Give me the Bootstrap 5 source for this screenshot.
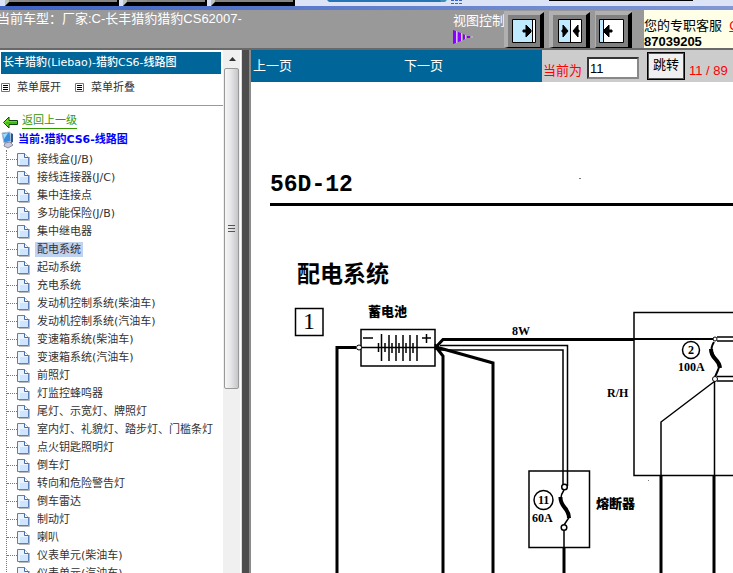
<!DOCTYPE html>
<html lang="zh-CN">
<head>
<meta charset="utf-8">
<meta name="viewport" content="width=device-width, initial-scale=1">
<title>长丰猎豹CS6 线路图</title>
<link href="https://cdn.jsdelivr.net/npm/bootstrap@5.3.0/dist/css/bootstrap.min.css" rel="stylesheet">
<style>
body{font-family:"Liberation Sans","Noto Sans CJK SC",sans-serif;font-size:13px;line-height:16px;color:#000;background:#fff}
.strip{height:10px;background:#dde3f6;border-bottom:4px solid #4a6bc8;border-image:linear-gradient(90deg,#3f64c4,#8298d4) 1}
.strip svg{height:6px}
.topbar{height:40px;background:#999;border-bottom:2px solid #696969}
.car-name{text-indent:-3px;color:#fff;line-height:18px}
.view-label{color:#fff;width:51px;padding-top:3px}
.view-btn{border:0;padding:0;background:none;line-height:0}
.view-set{gap:5px;margin-right:12px}
.service{background:#ffffe8;width:89px;padding-top:8px;line-height:16px}
.service a{color:#f00}
.tree-frame{width:241px}
.tree-main{font-family:"DejaVu Sans","Noto Sans CJK SC",sans-serif;font-size:11px;color:#333}
.tree-main a{color:inherit;text-decoration:none}
.tree-title{background:#069;color:#fff;height:22px;margin:2px 2px 0 1px;padding:0 2px;font-size:11px;line-height:21px}
.tree-tools{height:32px;padding:2px 0 6px 1px;border-bottom:1px solid #999}
.tool-btn{border:0;background:none;padding:0;color:#333;gap:7px;margin-right:14px}
.tree-main a.up-link{color:#390;border-bottom:1px solid #390;line-height:14px}
.tree-main a.root-link{color:#00f}
.root-row{padding:2px 0 1px}
.tree-list{margin-left:6px;border-left:1px dotted #777}
.tree-list li{height:18px}
.stub{width:10px;border-top:1px dotted #777}
.tree-list a{margin-left:5px;padding:0 2px;line-height:15px}
.tree-list a.picked{background:#c1d2ee}
.scroll-rail{width:17px;background:#f0f0f0;padding-left:1px;margin-right:1px}
.scroll-arrow{height:18px}
.scroll-thumb{height:61.4%;width:15px;border:1px solid #999;border-radius:2px;background:linear-gradient(90deg,#f6f6f6,#e6e6e8 45%,#c6c6ca)}
.splitter{width:10px;background:#4d4d4d;border-left:1px solid #ddd;border-right:2px solid #8a8a8a}
.pager{background:#069;height:32px}
.pager a{color:#fff;text-decoration:none}
.pager-links{gap:112px;padding-left:2px}
.jump{width:191px;background:#ccc;color:#f00;padding-left:1px}
.jump input{width:52px;height:22px;border:2px inset #888;padding:0 1px;background:#fff;color:#000;margin:4px 8px 0 5px}
.jump button{width:38px;height:28px;background:#f0f0f0;border:1px solid #000;outline:1px solid #555;outline-offset:-2px;padding:0 0 3px;margin-right:4px;color:#000}
.low{padding-top:9px}
.sheet text{font-family:"Liberation Serif","Noto Sans CJK SC",serif;font-weight:700;font-size:12px;fill:#000}
.sheet .code{font-family:"Liberation Mono",monospace;font-size:23px}
.sheet .heading{font-size:23px}
.sheet .part{font-size:13px;font-weight:900}
.sheet .figure-no{font-size:24px;font-weight:400}
</style>
<script src="https://cdn.jsdelivr.net/npm/bootstrap@5.3.0/dist/js/bootstrap.bundle.min.js"></script>
</head>
<body class="vh-100 overflow-hidden d-flex flex-column">
<svg class="d-none" aria-hidden="true">
  <symbol id="doc" viewBox="0 0 13 15"><path d="M2 14.500H12.500V5" fill="none" stroke="#bbb"/><path d="M.5 1.500H7.500L11.500 5.500V13.500H.5Z" fill="#eaf4ff" stroke="#5d7fb8"/><path d="M3 7H11V13H3Z" fill="#cfe5ff"/><path d="M7.500 1.500V5.500H11.500" fill="#fff" stroke="#4668a8"/></symbol>
  <symbol id="menu" viewBox="0 0 9 9"><path d="M.5 .5h8v8h-8z" fill="#fff" stroke="#777"/><path d="M2 2.500h5M2 4.500h5M2 6.500h5" stroke="#000"/></symbol>
</svg>

<div class="strip flex-shrink-0 overflow-hidden">
  <svg class="d-block" width="733" viewBox="0 0 733 6" aria-hidden="true">
    <path d="M5 0H119V6H5Z M123 0H207V6H123Z M211 0H295V6H211Z"/><path d="M9 0H117V2H9Z M127 0H205V2H127Z M215 0H293V2H215Z" fill="#858585"/><path d="M5 0H9V2L5 6Z M123 0H127V2L123 6Z M211 0H215V2L211 6Z" fill="#bbc2b8"/>
    <path d="M327 0H446L444 2H329Z" fill="#2574b5"/><path d="M440 0H447L445 2H441Z" fill="#3d91b8"/>
    <path d="M451 .5H463M451 3.500H463" stroke="#3568c5" stroke-dasharray="3 1"/><path d="M549 0H693V1H549Z"/>
  </svg>
</div>

<header class="topbar d-flex flex-shrink-0">
  <div class="car-name flex-grow-1 text-nowrap">当前车型：厂家:C-长丰猎豹猎豹CS62007-</div>
  <div class="view-label text-nowrap">视图控制
    <svg class="d-block" width="20" height="16" viewBox="0 0 20 16" aria-hidden="true"><path d="M0 1 3 2V14L0 15Z M5 3 8 4V12L5 13Z M10 5 12 6V10L10 11Z M14 7H17V9H14Z" fill="#80f"/><path d="M3.500 2V14M8.500 4V12M12.500 6V10M18 8h2" stroke="#dcb8ff"/></svg>
  </div>
  <div class="view-set d-flex flex-shrink-0">
    <button class="view-btn" aria-label="展开左侧"><svg width="40" height="38" viewBox="0 0 40 38"><path d="M0 1H40V38H0Z" fill="#b0b0b0"/><path d="M4 5H36V38H4Z" fill="#808080"/><path d="M40 2V38H0L4 37H36V5Z"/><path d="M8.500 9.500H31.500V32.500H8.500Z" fill="#fff" stroke="#000"/><path d="M9 10H28V32H9Z" fill="#bfeaff"/><path d="M28.500 10V32M19 20H22V15L27 20V22L22 27V22H19Z" stroke="#000"/></svg></button>
    <button class="view-btn" aria-label="左右均分"><svg width="41" height="38" viewBox="-1 0 41 38"><path d="M-1 1H40V38H-1Z" fill="#b0b0b0"/><path d="M3 5H36V38H3Z" fill="#808080"/><path d="M40 2V38H-1L3 37H36V5Z"/><path d="M8.500 9.500H31.500V32.500H8.500Z" fill="#fff" stroke="#000"/><path d="M9 10H20V32H9Z" fill="#bfeaff"/><path d="M20.500 10V32" stroke="#000"/><path d="M12 20H13V15L18 21L13 27V22H12Z M29 20H28V15L23 21L28 27V22H29Z" stroke="#000"/></svg></button>
    <button class="view-btn" aria-label="收起左侧"><svg width="37" height="38" viewBox="0 0 37 38"><path d="M0 1H37V38H0Z" fill="#b0b0b0"/><path d="M1 5H33V38H1Z" fill="#808080"/><path d="M37 2V38H0L1 37H33V5Z"/><path d="M4.500 9.500H28.500V32.500H4.500Z" fill="#fff" stroke="#000"/><path d="M5 10H8V32H5Z" fill="#bfeaff"/><path d="M8.500 10V32M17 20H14V15L9 20V22L14 27V22H17Z" stroke="#000"/></svg></button>
  </div>
  <div class="service text-nowrap flex-shrink-0">您的专职客服 &nbsp;<a href="#">C</a><br><b>87039205</b></div>
</header>

<div class="d-flex flex-grow-1 overflow-hidden">
  <aside class="tree-frame d-flex flex-shrink-0">
    <nav class="tree-main flex-grow-1 overflow-hidden text-nowrap">
      <h1 class="tree-title">长丰猎豹(Liebao)-猎豹CS6-线路图</h1>
      <div class="tree-tools d-flex align-items-center">
        <button class="tool-btn d-flex align-items-center"><svg width="9" height="9"><use href="#menu"/></svg>菜单展开</button>
        <button class="tool-btn d-flex align-items-center"><svg width="9" height="9"><use href="#menu"/></svg>菜单折叠</button>
      </div>
      <div class="d-flex align-items-center pt-2">
        <svg class="me-1" width="18" height="14" viewBox="0 0 18 14" aria-hidden="true"><path d="M3.500 7.500 9 2V5.500H17.500V9.500H9V13Z" fill="#6d2" stroke="#141"/><path d="M6 8H17" stroke="#290"/></svg>
        <a class="up-link" href="#">返回上一级</a>
      </div>
      <div class="root-row d-flex align-items-center">
        <svg class="me-1" width="14" height="18" viewBox="0 0 14 18" aria-hidden="true"><path d="M2 2 10 1 11 10 4 12Z" fill="#388ce0" stroke="#a8bed0"/><path d="M3 3 8 2 4 8Z" fill="#9be0ff"/><path d="M11 2 13 3V11L11 12Z" fill="#34548a"/><path d="M5 12 10 11 13 14 8 17 4 15Z" fill="#c8c8dc" stroke="#888ba0"/></svg>
        <a class="root-link fw-bold" href="#">当前:猎豹CS6-线路图</a>
      </div>
      <ul class="tree-list list-unstyled mb-0" id="tree"></ul>
    </nav>
    <div class="scroll-rail flex-shrink-0" aria-hidden="true">
      <div class="scroll-arrow d-flex justify-content-center align-items-center"><svg width="7" height="4"><path d="M0 4 3.500 0 7 4Z" fill="#333"/></svg></div>
      <div class="scroll-thumb d-flex justify-content-center align-items-center"><svg width="7" height="8"><path d="M0 .5H7M0 3.500H7M0 6.500H7" stroke="#555"/></svg></div>
    </div>
  </aside>
  <div class="splitter flex-shrink-0"></div>
  <main class="d-flex flex-column flex-grow-1 overflow-hidden">
    <div class="pager d-flex flex-shrink-0">
      <div class="pager-links d-flex align-items-center flex-grow-1 text-nowrap"><a href="#">上一页</a><a href="#">下一页</a></div>
      <form class="jump d-flex align-items-center flex-shrink-0 text-nowrap">
        <label class="low" for="page">当前为</label><input id="page" type="text" value="11"><button type="button">跳转</button><span class="low">11 / 89</span>
      </form>
    </div>
    <svg class="sheet d-block w-100 h-100" viewBox="251 82 482 491" preserveAspectRatio="xMinYMin slice" role="img" aria-label="配电系统线路图">
      <g fill="none" stroke="#000">
        <path d="M270 204.500H733" stroke-width="3"/>
        <path d="M295.500 308.500H323V335.500H295.500Z M361 329.500H435V366H361Z" stroke-width="1.500"/>
        <path d="M337 573V347.500H356" stroke-width="3"/>
        <path d="M361 347.500H436" stroke-width="1.500"/><circle cx="359" cy="347.500" r="2.500" fill="#fff"/>
        <path d="M378.500 343V352M381.500 334V361M385 343V352M389 335V361M392 343V353M396 335V361M399 343V353M403 335V361M406 343V353M410 335V361M413 343V353M417 335V361" stroke-width="1.500"/>
        <path d="M363 338H373M422 338H431M426.500 334V343" stroke-width="1.500"/>
        <path d="M436 347 443 339.500H634" stroke-width="3"/><path d="M634 339H715" stroke-width="2"/>
        <path d="M440 345.500H567.500V486M440 350H563V486" stroke-width="1.500"/>
        <path d="M436 347 443 356V573M436 347 493 363V573" stroke-width="3"/>
        <path d="M435 344 439 347 435 350Z" fill="#000"/>
        <path d="M733 312.500H634V475.500H733" stroke-width="1.500"/>
        <path d="M717 337H733M717 341H733M717 376.500H733M717 381H733" stroke-width="1.500"/>
        <path d="M715 381 661 422V475M714.500 381V475" stroke-width="1.500"/>
        <path d="M661 475V573M714 475V573" stroke-width="3"/>
        <path d="M714 342C705 356 724 360 718 370L715 377" stroke-width="2"/>
        <path d="M711 349C711 360 719 358 720 368" stroke-width="4"/>
        <circle cx="715" cy="339" r="2" fill="#fff"/><circle cx="715" cy="379" r="2.500" fill="#fff"/>
        <path d="M529 471H589.500V547.500H529Z" stroke-width="1.500"/>
        <path d="M564 490C553 506 575 510 568 519L564 525M564 530V547" stroke-width="1.500"/>
        <path d="M560.500 497C560 508 569 507 569 518" stroke-width="4"/><path d="M564 547V573" stroke-width="3"/>
        <circle cx="564.500" cy="487" r="2.800" fill="#fff" stroke-width="1.500"/><circle cx="564" cy="527.500" r="2.800" fill="#fff" stroke-width="1.500"/>
        <circle cx="691" cy="350" r="8.500" stroke-width="1.500"/><circle cx="543.500" cy="500" r="9.500" stroke-width="1.500"/>
      </g>
      <path d="M579 178h2v1h-2z M648 480h1v1h-1z" fill="#777"/>
      <text class="code" x="270" y="191">56D-12</text>
      <text class="heading" x="297" y="282">配电系统</text>
      <text class="figure-no" x="303" y="329">1</text>
      <text class="part" x="368" y="316">蓄电池</text>
      <text x="512" y="335">8W</text>
      <text x="688" y="354">2</text>
      <text x="678" y="371">100A</text>
      <text x="607" y="397">R/H</text>
      <text x="538" y="504">11</text>
      <text x="532" y="522">60A</text>
      <text class="part" x="596" y="508">熔断器</text>
    </svg>
  </main>
</div>
<script>
const items = ["接线盒(J/B)","接线连接器(J/C)","集中连接点","多功能保险(J/B)","集中继电器","配电系统","起动系统","充电系统","发动机控制系统(柴油车)","发动机控制系统(汽油车)","变速箱系统(柴油车)","变速箱系统(汽油车)","前照灯","灯监控蜂鸣器","尾灯、示宽灯、牌照灯","室内灯、礼貌灯、踏步灯、门槛条灯","点火钥匙照明灯","倒车灯","转向和危险警告灯","倒车雷达","制动灯","喇叭","仪表单元(柴油车)","仪表单元(汽油车)"];
document.getElementById("tree").innerHTML = items.map(t =>
  `<li class="d-flex align-items-center"><span class="stub"></span><svg width="13" height="15" aria-hidden="true"><use href="#doc"/></svg><a href="#"${t === "配电系统" ? ' class="picked"' : ""}>${t}</a></li>`).join("");
</script>
</body>
</html>
